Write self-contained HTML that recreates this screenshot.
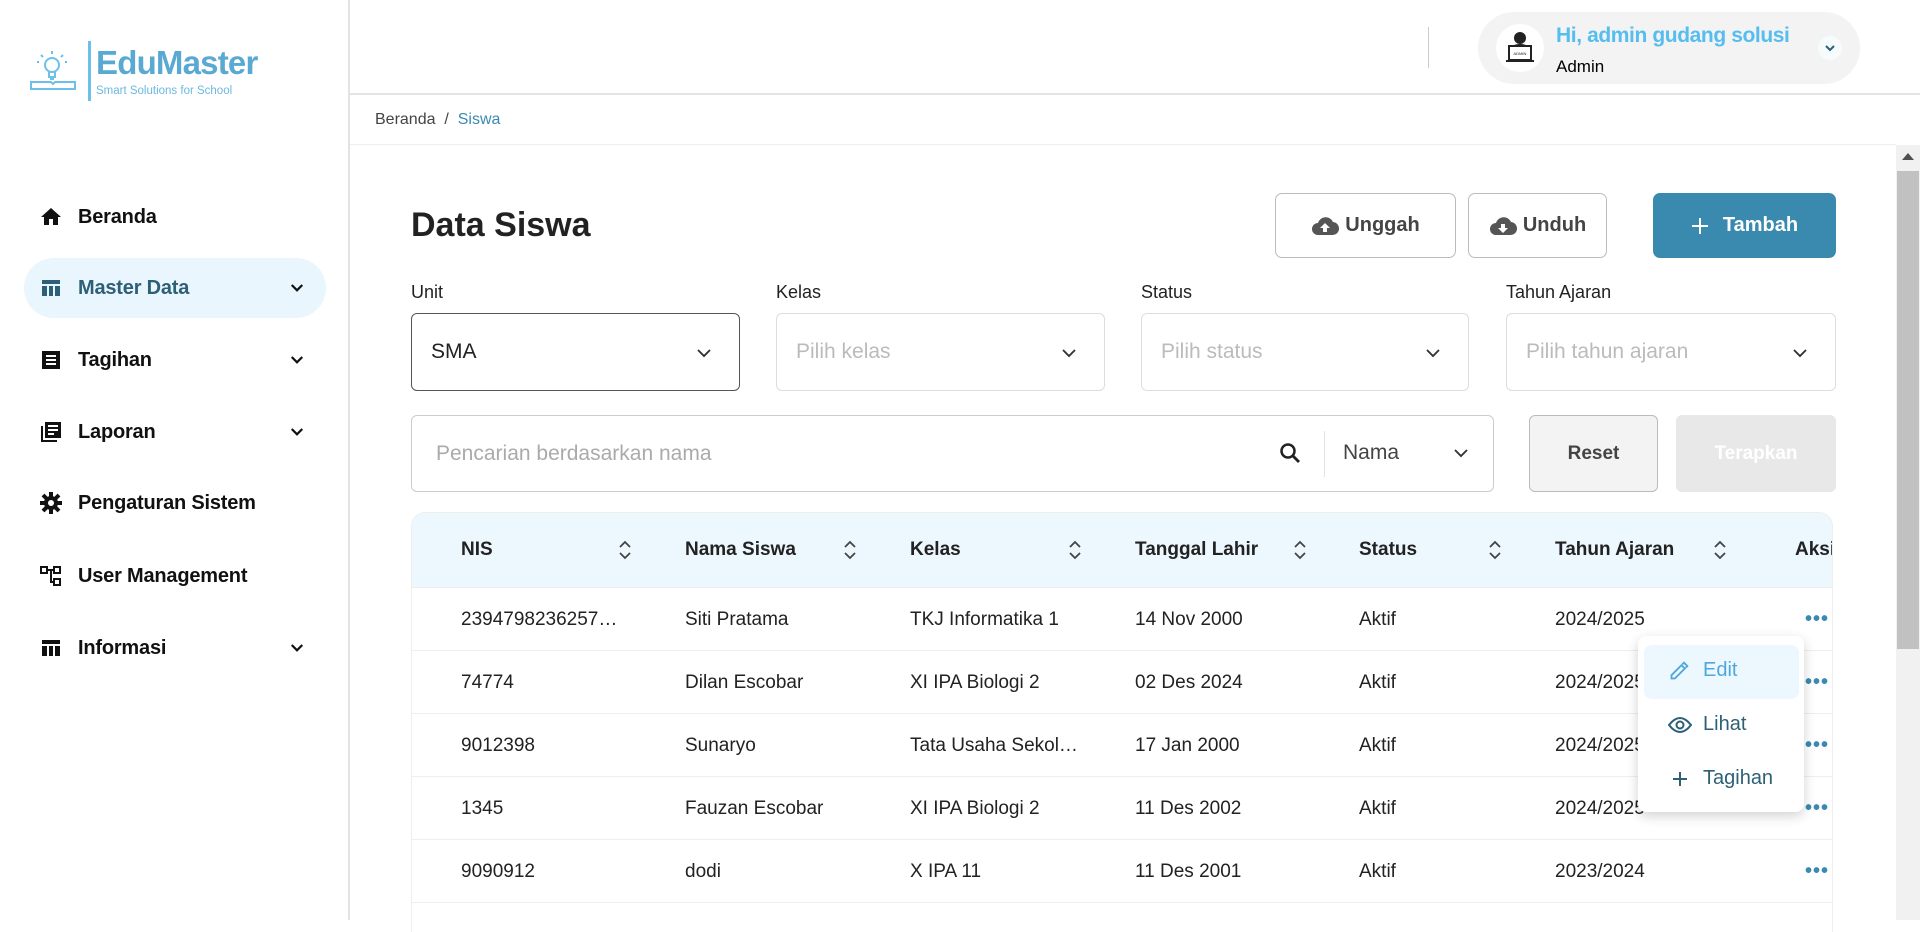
<!DOCTYPE html>
<html><head><meta charset="utf-8"><style>
*{box-sizing:border-box;margin:0;padding:0}
body{width:1920px;height:920px;overflow:hidden;background:#fff;font-family:"Liberation Sans",sans-serif;color:#222;position:relative}
.a{position:absolute}
.side{left:0;top:0;width:350px;height:920px;border-right:2px solid #e3e3e3}
.mi{position:absolute;left:24px;width:302px;height:60px;display:flex;align-items:center;font-size:20px;font-weight:bold;color:#111;letter-spacing:-0.2px}
.mi svg.ic{position:absolute;left:15px}
.mi span{position:absolute;left:54px}
.mi svg.ch{position:absolute;left:264px}
.lbl{font-size:18px;top:282px;color:#222}
.sel{top:313px;height:78px;border:1px solid #ddd;border-radius:6px;font-size:21px;color:#bbb;display:flex;align-items:center;padding-left:19px}
.sel svg{position:absolute;right:26px;top:30px}
.btn{top:193px;height:65px;border:1px solid #bbb;border-radius:7px;display:flex;align-items:center;justify-content:center;font-size:20px;font-weight:bold;color:#444;gap:6px}
.th{position:absolute;top:0;height:74px;display:flex;align-items:center;font-size:19px;font-weight:bold;color:#222}
.row{position:absolute;left:0;width:1440px;height:63px;border-top:1px solid #eee}
.row div{position:absolute;top:0;height:63px;display:flex;align-items:center;font-size:19px;color:#222}
.row div.dots{color:#3a8ab0;font-weight:bold;letter-spacing:1px;font-size:20px}
</style></head><body>
<div class="a side"></div>
<!-- logo -->
<svg class="a" style="left:28px;top:48px" width="50" height="48" viewBox="0 0 50 48" fill="none" stroke="#6cc0ea" stroke-width="2">
<circle cx="24" cy="17" r="7"/><path d="M21 24v5h6v-5M22 31h4"/><path d="M24 3v3M13 7l2 2M35 7l-2 2M9 14h2M39 14h-2"/>
<path d="M3 34h20l2 2 2-2h20v7H3z"/><path d="M3 41h44"/></svg>
<div class="a" style="left:88px;top:41px;width:3px;height:60px;background:#6cc0ea"></div>
<div class="a" style="left:96px;top:44px;font-size:33px;font-weight:bold;color:#5aa9d3;letter-spacing:-0.8px">EduMaster</div>
<div class="a" style="left:96px;top:85px;font-size:11.5px;color:#6cb8e0">Smart Solutions for School</div>

<!-- menu -->
<div class="mi" style="top:187px"><svg class="ic" width="24" height="24" viewBox="0 0 24 24"><path d="M10 20v-6h4v6h5v-8h3L12 3 2 12h3v8z" fill="#111"/></svg><span>Beranda</span></div>
<div class="mi" style="top:258px;background:#e9f6fd;border-radius:30px;color:#2d5f77"><svg class="ic" width="24" height="24" viewBox="0 0 24 24"><path d="M3 4h18v4H3zM3 10h5v10H3zM10 10h4v10h-4zM16 10h5v10h-5z" fill="#2d5f77"/></svg><span>Master Data</span><svg class="ch" width="18" height="18" viewBox="0 0 24 24"><path d="M5 8l7 7 7-7" stroke="#111" stroke-width="3" fill="none"/></svg></div>
<div class="mi" style="top:330px"><svg class="ic" width="24" height="24" viewBox="0 0 24 24"><path d="M3 3h18v18H3z" fill="#111"/><path d="M7 8h10M7 12h10M7 16h10" stroke="#fff" stroke-width="2"/></svg><span>Tagihan</span><svg class="ch" width="18" height="18" viewBox="0 0 24 24"><path d="M5 8l7 7 7-7" stroke="#111" stroke-width="3" fill="none"/></svg></div>
<div class="mi" style="top:402px"><svg class="ic" width="24" height="24" viewBox="0 0 24 24"><path d="M2 6v16h16v-2H4V6z" fill="#111"/><path d="M6 2h16v16H6z" fill="#111"/><path d="M9 6h10M9 10h10M9 14h6" stroke="#fff" stroke-width="2"/></svg><span>Laporan</span><svg class="ch" width="18" height="18" viewBox="0 0 24 24"><path d="M5 8l7 7 7-7" stroke="#111" stroke-width="3" fill="none"/></svg></div>
<div class="mi" style="top:473px"><svg class="ic" width="24" height="24" viewBox="0 0 24 24"><circle cx="12" cy="12" r="7" fill="#111"/><path d="M12 1v22M1 12h22M4 4l16 16M20 4L4 20" stroke="#111" stroke-width="4"/><circle cx="12" cy="12" r="3" fill="#fff"/></svg><span>Pengaturan Sistem</span></div>
<div class="mi" style="top:546px"><svg class="ic" width="24" height="24" viewBox="0 0 24 24" fill="none" stroke="#111" stroke-width="2"><rect x="2" y="3" width="6" height="6"/><rect x="15" y="3" width="6" height="6"/><rect x="15" y="15" width="6" height="6"/><path d="M8 6h7M12 6v12h3"/></svg><span>User Management</span></div>
<div class="mi" style="top:618px"><svg class="ic" width="24" height="24" viewBox="0 0 24 24"><path d="M3 4h18v4H3zM3 10h5v10H3zM10 10h4v10h-4zM16 10h5v10h-5z" fill="#111"/></svg><span>Informasi</span><svg class="ch" width="18" height="18" viewBox="0 0 24 24"><path d="M5 8l7 7 7-7" stroke="#111" stroke-width="3" fill="none"/></svg></div>

<!-- header -->
<div class="a" style="left:350px;top:93px;width:1570px;height:2px;background:#e3e3e3"></div>
<div class="a" style="left:1428px;top:27px;width:1px;height:41px;background:#ccc"></div>
<div class="a" style="left:1478px;top:12px;width:382px;height:72px;border-radius:36px;background:#f3f3f3"></div>
<div class="a" style="left:1496px;top:24px;width:48px;height:48px;border-radius:50%;background:#fff"></div>
<svg class="a" style="left:1505px;top:30px" width="30" height="34" viewBox="0 0 30 34"><circle cx="15" cy="8" r="6" fill="#222"/><path d="M6 20q0-6 9-6t9 6z" fill="#222"/><rect x="4" y="16" width="22" height="14" fill="#fff" stroke="#222" stroke-width="2"/><path d="M1 31h28" stroke="#222" stroke-width="2"/><text x="15" y="25" font-size="4" text-anchor="middle" fill="#222" font-family="Liberation Sans">ADMIN</text></svg>
<div class="a" style="left:1556px;top:24px;font-size:21px;font-weight:bold;color:#55bdf0;letter-spacing:-0.4px">Hi, admin gudang solusi</div>
<div class="a" style="left:1556px;top:57px;font-size:17px;color:#000">Admin</div>
<div class="a" style="left:1818px;top:36px;width:24px;height:24px;border-radius:50%;background:#f6fbfe"></div>
<svg class="a" style="left:1824px;top:42px" width="12" height="12" viewBox="0 0 24 24"><path d="M4 8l8 8 8-8" stroke="#2d5f77" stroke-width="4" fill="none"/></svg>

<!-- breadcrumb -->
<div class="a" style="left:375px;top:111px;font-size:16px;color:#444">Beranda &nbsp;/ &nbsp;<span style="color:#3a8ab0">Siswa</span></div>
<div class="a" style="left:350px;top:144px;width:1546px;height:1px;background:#eee"></div>

<!-- scrollbar -->
<div class="a" style="left:1896px;top:145px;width:24px;height:775px;background:#f1f1f1"></div>
<div class="a" style="left:1897px;top:171px;width:22px;height:478px;background:#c1c1c1"></div>
<svg class="a" style="left:1902px;top:152px" width="12" height="8"><path d="M0 8L6 1 12 8z" fill="#505050"/></svg>

<!-- title & buttons -->
<div class="a" style="left:411px;top:206px;font-size:34px;font-weight:bold;color:#222">Data Siswa</div>
<div class="a btn" style="left:1275px;width:181px"><svg width="28" height="22" viewBox="0 0 28 22"><path d="M7 20a6 6 0 010-12 8 8 0 0115-1 6.5 6.5 0 01-1 13z" fill="#555"/><path d="M14 8l-5 5h3v4h4v-4h3z" fill="#fff"/></svg>Unggah</div>
<div class="a btn" style="left:1468px;width:139px"><svg width="28" height="22" viewBox="0 0 28 22"><path d="M7 20a6 6 0 010-12 8 8 0 0115-1 6.5 6.5 0 01-1 13z" fill="#555"/><path d="M14 18l-5-5h3V9h4v4h3z" fill="#fff"/></svg>Unduh</div>
<div class="a btn" style="left:1653px;width:183px;background:#3a8ab0;border-color:#3a8ab0;color:#fff;gap:14px"><svg width="18" height="18"><path d="M9 1v16M1 9h16" stroke="#fff" stroke-width="2"/></svg>Tambah</div>

<!-- filters -->
<div class="a lbl" style="left:411px">Unit</div>
<div class="a lbl" style="left:776px">Kelas</div>
<div class="a lbl" style="left:1141px">Status</div>
<div class="a lbl" style="left:1506px">Tahun Ajaran</div>
<div class="a sel" style="left:411px;width:329px;border-color:#555;color:#222">SMA<svg width="18" height="18" viewBox="0 0 24 24"><path d="M4 8l8 8 8-8" stroke="#333" stroke-width="2.5" fill="none"/></svg></div>
<div class="a sel" style="left:776px;width:329px">Pilih kelas<svg width="18" height="18" viewBox="0 0 24 24"><path d="M4 8l8 8 8-8" stroke="#333" stroke-width="2.5" fill="none"/></svg></div>
<div class="a sel" style="left:1141px;width:328px">Pilih status<svg width="18" height="18" viewBox="0 0 24 24"><path d="M4 8l8 8 8-8" stroke="#333" stroke-width="2.5" fill="none"/></svg></div>
<div class="a sel" style="left:1506px;width:330px">Pilih tahun ajaran<svg width="18" height="18" viewBox="0 0 24 24"><path d="M4 8l8 8 8-8" stroke="#333" stroke-width="2.5" fill="none"/></svg></div>

<!-- search -->
<div class="a" style="left:411px;top:415px;width:1083px;height:77px;border:1px solid #ccc;border-radius:6px"></div>
<div class="a" style="left:436px;top:442px;font-size:21px;color:#aaa">Pencarian berdasarkan nama</div>
<svg class="a" style="left:1278px;top:441px" width="24" height="24" viewBox="0 0 24 24"><circle cx="10" cy="10" r="6.5" stroke="#222" stroke-width="2.5" fill="none"/><path d="M15 15l6 6" stroke="#222" stroke-width="2.8"/></svg>
<div class="a" style="left:1324px;top:431px;width:1px;height:46px;background:#e3e3e3"></div>
<div class="a" style="left:1343px;top:441px;font-size:21px;color:#444">Nama</div>
<svg class="a" style="left:1452px;top:444px" width="18" height="18" viewBox="0 0 24 24"><path d="M4 8l8 8 8-8" stroke="#333" stroke-width="2.5" fill="none"/></svg>
<div class="a" style="left:1529px;top:415px;width:129px;height:77px;border:1px solid #bbb;border-radius:6px;background:#f3f3f3;display:flex;align-items:center;justify-content:center;font-size:19px;font-weight:bold;color:#444">Reset</div>
<div class="a" style="left:1676px;top:415px;width:160px;height:77px;border-radius:6px;background:#e8e8e8;display:flex;align-items:center;justify-content:center;font-size:19px;font-weight:bold;color:#fff">Terapkan</div>

<!-- table -->
<div class="a" style="left:411px;top:512px;width:1422px;height:420px;overflow:hidden;border:1px solid #eee;border-bottom:none;border-radius:14px 14px 0 0">
 <div style="position:absolute;left:0;top:0;width:1440px;height:74px;background:#ecf7fe"></div>
 <div class="th" style="left:49px">NIS</div>
 <div class="th" style="left:273px">Nama Siswa</div>
 <div class="th" style="left:498px">Kelas</div>
 <div class="th" style="left:723px">Tanggal Lahir</div>
 <div class="th" style="left:947px">Status</div>
 <div class="th" style="left:1143px">Tahun Ajaran</div>
 <div class="th" style="left:1383px">Aksi</div>
 <svg style="position:absolute;left:206px;top:26px" width="14" height="22" viewBox="0 0 14 22"><path d="M2 8l5-5 5 5M2 14l5 5 5-5" stroke="#444" stroke-width="1.8" fill="none"/></svg>
 <svg style="position:absolute;left:431px;top:26px" width="14" height="22" viewBox="0 0 14 22"><path d="M2 8l5-5 5 5M2 14l5 5 5-5" stroke="#444" stroke-width="1.8" fill="none"/></svg>
 <svg style="position:absolute;left:656px;top:26px" width="14" height="22" viewBox="0 0 14 22"><path d="M2 8l5-5 5 5M2 14l5 5 5-5" stroke="#444" stroke-width="1.8" fill="none"/></svg>
 <svg style="position:absolute;left:881px;top:26px" width="14" height="22" viewBox="0 0 14 22"><path d="M2 8l5-5 5 5M2 14l5 5 5-5" stroke="#444" stroke-width="1.8" fill="none"/></svg>
 <svg style="position:absolute;left:1076px;top:26px" width="14" height="22" viewBox="0 0 14 22"><path d="M2 8l5-5 5 5M2 14l5 5 5-5" stroke="#444" stroke-width="1.8" fill="none"/></svg>
 <svg style="position:absolute;left:1301px;top:26px" width="14" height="22" viewBox="0 0 14 22"><path d="M2 8l5-5 5 5M2 14l5 5 5-5" stroke="#444" stroke-width="1.8" fill="none"/></svg>

 <div class="row" style="top:74px"><div style="left:49px">2394798236257…</div><div style="left:273px">Siti Pratama</div><div style="left:498px">TKJ Informatika 1</div><div style="left:723px">14 Nov 2000</div><div style="left:947px">Aktif</div><div style="left:1143px">2024/2025</div><div class="dots" style="left:1393px">•••</div></div>
 <div class="row" style="top:137px"><div style="left:49px">74774</div><div style="left:273px">Dilan Escobar</div><div style="left:498px">XI IPA Biologi 2</div><div style="left:723px">02 Des 2024</div><div style="left:947px">Aktif</div><div style="left:1143px">2024/2025</div><div class="dots" style="left:1393px">•••</div></div>
 <div class="row" style="top:200px"><div style="left:49px">9012398</div><div style="left:273px">Sunaryo</div><div style="left:498px">Tata Usaha Sekol…</div><div style="left:723px">17 Jan 2000</div><div style="left:947px">Aktif</div><div style="left:1143px">2024/2025</div><div class="dots" style="left:1393px">•••</div></div>
 <div class="row" style="top:263px"><div style="left:49px">1345</div><div style="left:273px">Fauzan Escobar</div><div style="left:498px">XI IPA Biologi 2</div><div style="left:723px">11 Des 2002</div><div style="left:947px">Aktif</div><div style="left:1143px">2024/2025</div><div class="dots" style="left:1393px">•••</div></div>
 <div class="row" style="top:326px"><div style="left:49px">9090912</div><div style="left:273px">dodi</div><div style="left:498px">X IPA 11</div><div style="left:723px">11 Des 2001</div><div style="left:947px">Aktif</div><div style="left:1143px">2023/2024</div><div class="dots" style="left:1393px">•••</div></div>
 <div class="row" style="top:389px"></div>
</div>

<!-- popup menu -->
<div class="a" style="left:1638px;top:636px;width:166px;height:176px;background:#fff;border-radius:8px;box-shadow:0 4px 12px rgba(0,0,0,.18)"></div>
<div class="a" style="left:1644px;top:645px;width:155px;height:54px;background:#ecf7fe;border-radius:8px"></div>
<svg class="a" style="left:1669px;top:661px" width="20" height="20" viewBox="0 0 24 24"><path d="M3 21v-4L15 5l4 4L7 21zM16 4l2-2 4 4-2 2" fill="none" stroke="#4fa8dc" stroke-width="2.2"/></svg>
<div class="a" style="left:1703px;top:659px;font-size:20px;color:#4fa8dc">Edit</div>
<svg class="a" style="left:1668px;top:715px" width="24" height="20" viewBox="0 0 24 20"><path d="M1 10q11-14 22 0-11 14-22 0z" fill="none" stroke="#2d5f77" stroke-width="2"/><circle cx="12" cy="10" r="3.5" fill="none" stroke="#2d5f77" stroke-width="2"/></svg>
<div class="a" style="left:1703px;top:713px;font-size:20px;color:#2d5f77">Lihat</div>
<svg class="a" style="left:1672px;top:771px" width="16" height="16"><path d="M8 1v14M1 8h14" stroke="#2d5f77" stroke-width="2"/></svg>
<div class="a" style="left:1703px;top:767px;font-size:20px;color:#2d5f77">Tagihan</div>
</body></html>
